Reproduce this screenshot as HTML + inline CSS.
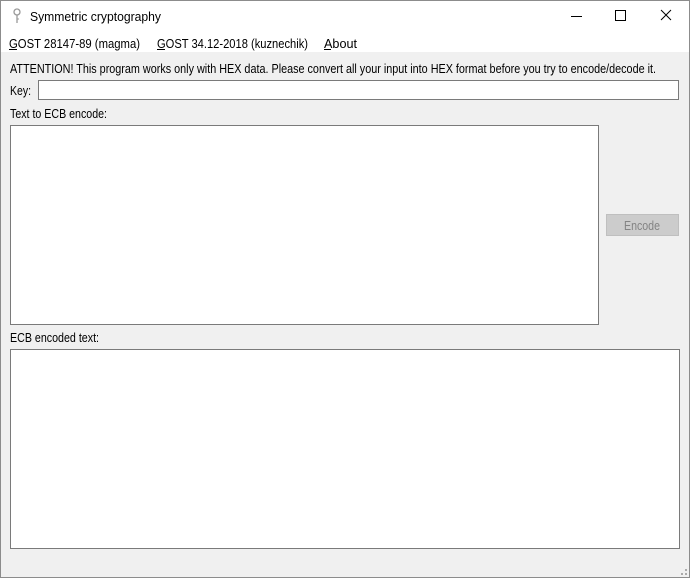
<!DOCTYPE html>
<html><head><style>
body{margin:0;width:690px;height:578px;overflow:hidden;font-family:"Liberation Sans",sans-serif;font-size:12px;color:#000;}
.win{position:absolute;left:0;top:0;width:688px;height:576px;border:1px solid #8c8c8c;background:#f0f0f0;overflow:hidden}
.box{position:absolute;background:#fff;border:1px solid #7a7a7a;box-sizing:border-box;}
svg.txt{position:absolute;left:0;top:0;overflow:hidden}
svg.txt text{font-family:"Liberation Sans",sans-serif;font-size:12.5px;}
</style></head><body>
<div class="win">
<div style="position:absolute;left:0;top:0;width:688px;height:51px;background:#fff"></div>
<svg style="position:absolute;left:11px;top:7px" width="10" height="16"><circle cx="5" cy="4" r="3" fill="none" stroke="#999" stroke-width="1.3"/><line x1="5" y1="7" x2="5" y2="15" stroke="#999" stroke-width="1.3"/><line x1="5" y1="11" x2="7" y2="11" stroke="#999"/></svg>
<div style="position:absolute;left:570px;top:15px;width:11px;height:1px;background:#000"></div>
<div style="position:absolute;left:614px;top:9px;width:9px;height:9px;border:1px solid #000"></div>
<svg style="position:absolute;left:659px;top:8px" width="12" height="12"><path d="M1 1L11 11M11 1L1 11" stroke="#000" stroke-width="1"/></svg>
<div class="box" style="left:37px;top:79px;width:641px;height:20px"></div>
<div class="box" style="left:9px;top:124px;width:589px;height:200px"></div>
<div style="position:absolute;left:605px;top:213px;width:73px;height:22px;box-sizing:border-box;background:#cccccc;border:1px solid #bfbfbf"></div>
<div class="box" style="left:9px;top:348px;width:670px;height:200px"></div>
<svg class="txt" width="688" height="576">
<text x="29" y="20" textLength="131" lengthAdjust="spacingAndGlyphs" style="font-size:13px">Symmetric cryptography</text>
<text x="8" y="47" textLength="131" lengthAdjust="spacingAndGlyphs" style="font-size:13px">GOST 28147-89 (magma)</text>
<text x="156" y="47" textLength="151" lengthAdjust="spacingAndGlyphs" style="font-size:13px">GOST 34.12-2018 (kuznechik)</text>
<text x="323" y="47" textLength="33" lengthAdjust="spacingAndGlyphs" style="font-size:13px">About</text>
<rect x="8" y="48" width="8" height="1"/><rect x="156" y="48" width="8" height="1"/><rect x="323" y="48" width="7" height="1"/>
<text x="9" y="72" textLength="646" lengthAdjust="spacingAndGlyphs">ATTENTION! This program works only with HEX data. Please convert all your input into HEX format before you try to encode/decode it.</text>
<text x="9" y="94" textLength="21" lengthAdjust="spacingAndGlyphs">Key:</text>
<text x="9" y="117" textLength="97" lengthAdjust="spacingAndGlyphs">Text to ECB encode:</text>
<text x="9" y="341" textLength="89" lengthAdjust="spacingAndGlyphs">ECB encoded text:</text>
<text x="623" y="229" textLength="36" lengthAdjust="spacingAndGlyphs" fill="#838383">Encode</text>
<g fill="#aaa"><rect x="684" y="568" width="2" height="2"/><rect x="680" y="572" width="2" height="2"/><rect x="684" y="572" width="2" height="2"/></g>
</svg>
</div>
</body></html>
